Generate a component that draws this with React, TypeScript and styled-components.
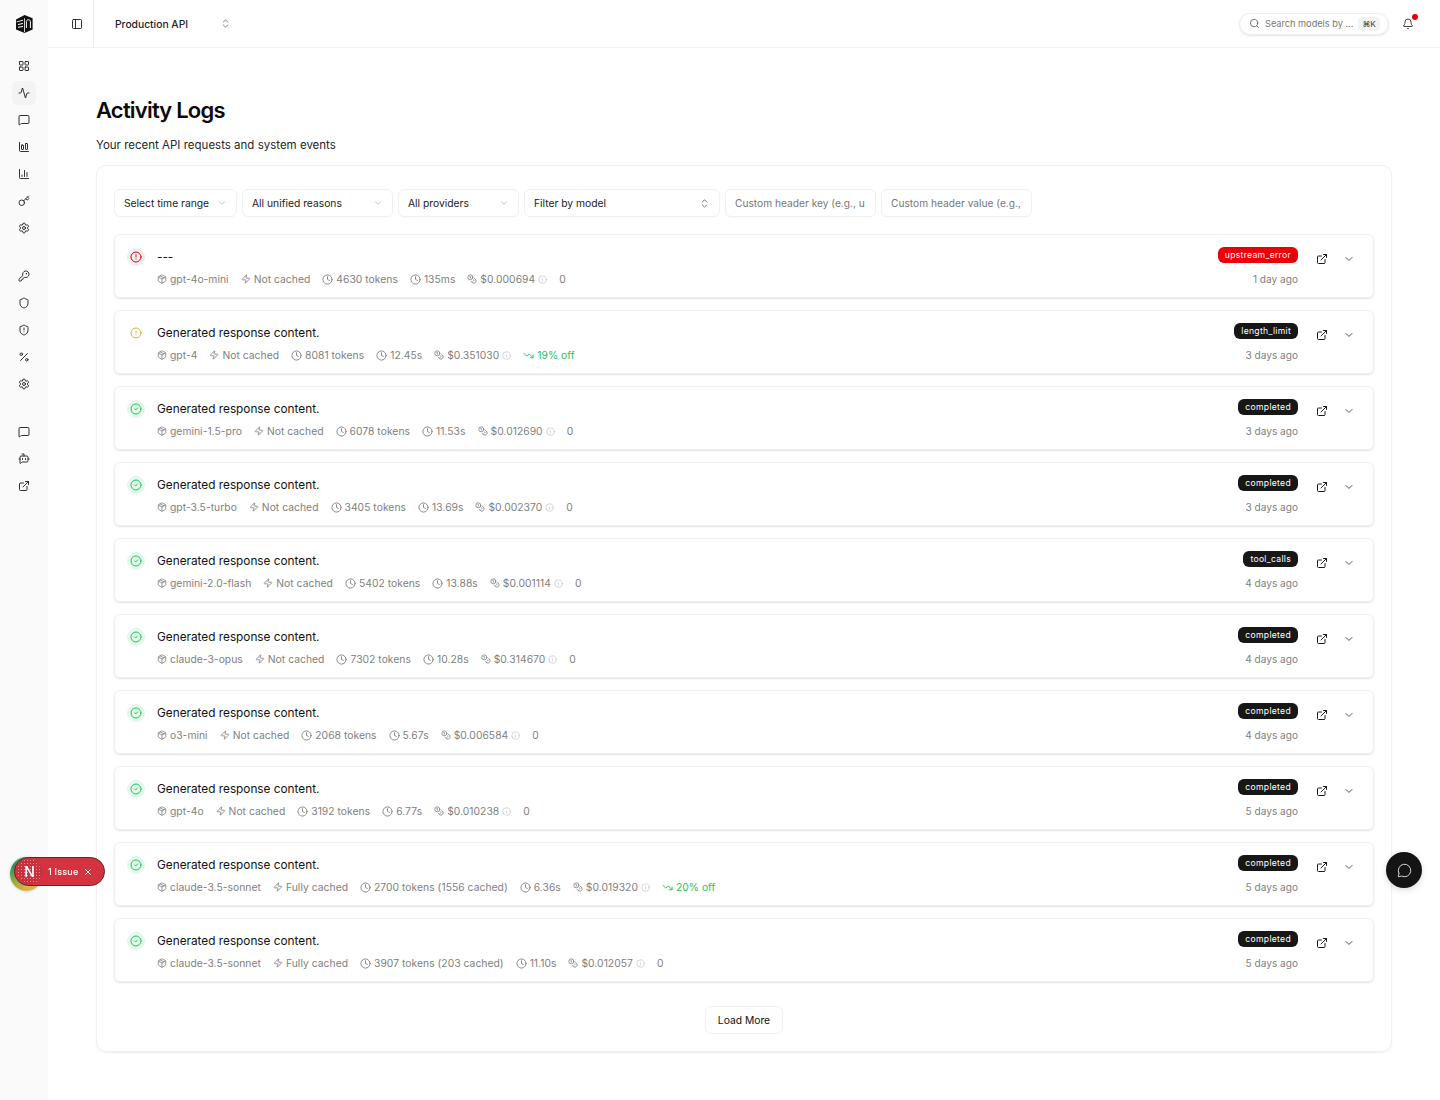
import styled, { createGlobalStyle } from 'styled-components'
import {
  Activity,
  BotMessageSquare,
  ChartColumn,
  ChartColumnBig,
  ChevronDown,
  ChevronsUpDown,
  CircleAlert,
  CircleCheck,
  Clock,
  Coins,
  ExternalLink,
  Info,
  Key,
  KeyRound,
  LayoutGrid,
  MessageCircle,
  MessageSquare,
  Package,
  PanelLeft,
  Percent,
  Search,
  Settings,
  Shield,
  ShieldAlert,
  TrendingDown,
  Bell,
  X,
  Zap,
} from 'lucide-react'

const GlobalStyle = createGlobalStyle`
  html, body {
    margin: 0;
    padding: 0;
    background: #fff;
    font-family: Inter, "Liberation Sans", sans-serif;
    color: #0a0a0a;
  }
  * { box-sizing: border-box; }
`

const Shell = styled.div`
  display: flex;
  width: 1440px;
  min-height: 1100px;
`

const Sidebar = styled.aside`
  flex: none;
  width: 48px;
  background: #fafafa;
  display: flex;
  flex-direction: column;
  align-items: center;
`

const LogoSlot = styled.div`
  height: 48px;
  display: flex;
  align-items: center;
  justify-content: center;
`

const NavGroup = styled.nav`
  display: flex;
  flex-direction: column;
  gap: 3px;
  margin-top: 6px;

  & + & {
    margin-top: 24px;
  }
`

const NavItem = styled.div<{ $active?: boolean }>`
  width: 24px;
  height: 24px;
  border-radius: 6px;
  display: flex;
  align-items: center;
  justify-content: center;
  background: ${({ $active }) => ($active ? '#f3f3f3' : 'transparent')};
  color: #1a1a1a;
`

const Main = styled.main`
  flex: 1;
  min-width: 0;
`

const Header = styled.header`
  height: 48px;
  display: flex;
  align-items: center;
  border-bottom: 1px solid #f2f2f2;
`

const ToggleCell = styled.div`
  width: 46px;
  height: 100%;
  display: flex;
  align-items: center;
  justify-content: center;
  border-right: 1px solid #ececec;
  color: #1a1a1a;
  padding-left: 12px;
`

const Project = styled.div`
  width: 116px;
  margin-left: 21px;
  display: flex;
  align-items: center;
  justify-content: space-between;
  font-size: 10.3px;
  font-weight: 500;
  color: #222;

  svg {
    color: #777;
  }
`

const HeaderRight = styled.div`
  margin-left: auto;
  display: flex;
  align-items: center;
  gap: 12px;
  padding-right: 25px;
`

const SearchPill = styled.div`
  width: 150px;
  height: 22px;
  border-radius: 11px;
  border: 1px solid #eee;
  box-shadow: 0 1px 2px rgba(0, 0, 0, 0.1);
  display: flex;
  align-items: center;
  gap: 5px;
  padding: 0 10px 0 9px;
  font-size: 9.2px;
  color: #777;
  background: #fff;
  white-space: nowrap;

  svg {
    flex: none;
    color: #666;
  }
`

const Kbd = styled.span`
  margin-left: auto;
  font-size: 8px;
  height: 14px;
  padding: 0 4px;
  border-radius: 4px;
  background: #f3f3f3;
  color: #555;
  display: flex;
  align-items: center;
  font-weight: 500;
`

const BellWrap = styled.div`
  position: relative;
  width: 14px;
  height: 14px;
  display: flex;
  align-items: center;
  justify-content: center;
  color: #444;
`

const RedDot = styled.span`
  position: absolute;
  top: -3px;
  right: -3px;
  width: 6px;
  height: 6px;
  border-radius: 50%;
  background: #e7000b;
`

const Content = styled.div`
  padding: 48px 48px 48px;
`

const Title = styled.h1`
  margin: 0;
  font-size: 22px;
  line-height: 28px;
  font-weight: 600;
  letter-spacing: -0.8px;
  color: #0a0a0a;
`

const Subtitle = styled.p`
  margin: 12px 0 0;
  font-size: 11.5px;
  line-height: 18px;
  color: #262626;
`

const Card = styled.section`
  margin-top: 11px;
  height: 887px;
  border: 1px solid #f0f0f0;
  border-radius: 10px;
  box-shadow: 0 1px 2px rgba(0, 0, 0, 0.07);
  padding: 23px 17px 0;
`

const Filters = styled.div`
  display: flex;
  gap: 5px;
`

const Select = styled.div<{ $w: number; $dark?: boolean }>`
  width: ${({ $w }) => $w}px;
  height: 28px;
  flex: none;
  border: 1px solid #f0f0f0;
  border-radius: 6px;
  box-shadow: 0 1px 1px rgba(0, 0, 0, 0.02);
  display: flex;
  align-items: center;
  justify-content: space-between;
  padding: 0 9px;
  font-size: 10.3px;
  color: #222;
  white-space: nowrap;
  overflow: hidden;

  svg {
    flex: none;
    color: ${({ $dark }) => ($dark ? '#666' : '#bbb')};
  }
`

const InputBox = styled(Select)`
  color: #777;
  font-size: 10.2px;
`

const Rows = styled.div`
  margin-top: 17px;
  display: flex;
  flex-direction: column;
  gap: 12px;
`

const Row = styled.article`
  height: 64px;
  border: 1px solid #f0f0f0;
  border-radius: 6px;
  box-shadow: 0 1px 2px rgba(0, 0, 0, 0.12);
  display: flex;
  align-items: flex-start;
  padding: 13px 18px 0 12px;
`

const StatusDisc = styled.div<{ $tone: 'red' | 'yellow' | 'green' }>`
  flex: none;
  width: 18px;
  height: 18px;
  border-radius: 50%;
  display: flex;
  align-items: center;
  justify-content: center;
  background: ${({ $tone }) =>
    $tone === 'red' ? '#eeeeee' : $tone === 'green' ? '#e3f8ea' : 'transparent'};
  color: ${({ $tone }) =>
    $tone === 'red' ? '#e7000b' : $tone === 'green' ? '#22c55e' : '#d4b13f'};
`

const RowBody = styled.div`
  margin-left: 12px;
  padding-top: 1px;
  flex: 1;
  min-width: 0;
`

const RowTitle = styled.div`
  font-size: 11.8px;
  line-height: 16px;
  color: #111;
`

const Meta = styled.div`
  margin-top: 7px;
  display: flex;
  align-items: center;
  gap: 12px;
  font-size: 10.3px;
  line-height: 14px;
  color: #808080;
  letter-spacing: 0.04px;
`

const MetaItem = styled.span<{ $green?: boolean }>`
  display: inline-flex;
  align-items: center;
  gap: 3px;
  white-space: nowrap;
  color: ${({ $green }) => ($green ? '#22c55e' : 'inherit')};
`

const InfoIcon = styled(Info)`
  color: #c8c8c8;
`

const RowSide = styled.div`
  flex: none;
  margin-top: -1px;
  display: flex;
  flex-direction: column;
  align-items: flex-end;
  gap: 9px;
`

const Badge = styled.span<{ $red?: boolean }>`
  height: 16px;
  padding: 0 7px;
  border-radius: 6px;
  display: inline-flex;
  align-items: center;
  font-size: 8.6px;
  font-weight: 400;
  letter-spacing: 0.3px;
  color: #fff;
  background: ${({ $red }) => ($red ? '#ea0008' : '#171717')};
`

const Ago = styled.span`
  font-size: 10.1px;
  line-height: 14px;
  color: #808080;
`

const RowActions = styled.div`
  flex: none;
  display: flex;
  align-items: center;
  gap: 15px;
  margin: 5px 0 0 18px;
  color: #1a1a1a;

  svg + svg {
    color: #555;
  }
`

const LoadRow = styled.div`
  display: flex;
  justify-content: center;
  margin-top: 24px;
`

const LoadButton = styled.button`
  width: 78px;
  height: 28px;
  border: 1px solid #f0f0f0;
  border-radius: 6px;
  background: #fff;
  font: 400 10.3px Inter, sans-serif;
  color: #111;
`

const ChatFab = styled.div`
  position: fixed;
  left: 1386px;
  top: 852px;
  width: 36px;
  height: 36px;
  border-radius: 50%;
  background: #141414;
  box-shadow: 0 2px 6px rgba(0, 0, 0, 0.15);
  color: #d8d8d8;
  display: flex;
  align-items: center;
  justify-content: center;
`

const DevBadge = styled.div`
  position: fixed;
  left: 10px;
  top: 857px;
  width: 95px;
  height: 34px;
`

const DevHalo = styled.div`
  position: absolute;
  left: 0;
  top: 0;
  width: 33px;
  height: 34px;
  border-radius: 50%;
  background: conic-gradient(#3fa46b, #8fae3a, #b7c24a, #e2b04a, #8fae3a, #2f8f5f, #3fa46b);
  box-shadow: 0 0 3px rgba(0, 0, 0, 0.2);
`

const DevPill = styled.div`
  position: absolute;
  left: 4px;
  top: 0;
  width: 91px;
  height: 29px;
  border-radius: 15px;
  border: 1px solid #5c2a2e;
  background: radial-gradient(rgba(255, 40, 40, 0.45) 0.6px, transparent 0.8px) 0 0 / 3px 3px #d1333f;
  color: #fff;
  display: flex;
  align-items: center;
  font-size: 9px;
  font-weight: 500;

  svg {
    flex: none;
  }
`

const DevLogo = styled.span`
  flex: none;
  margin-left: 2px;
  width: 25px;
  height: 25px;
  border-radius: 50%;
  display: flex;
  align-items: center;
  justify-content: center;
  font-size: 14px;
  font-weight: 500;
  background: radial-gradient(rgba(255, 255, 255, 0.5) 0.6px, transparent 0.8px) 0 0 / 3px 3px #c8303c;
`

const DevLabel = styled.span`
  margin: 0 5px 0 6px;
  letter-spacing: 0.2px;
`

function Logo() {
  return (
    <svg width="18" height="18" viewBox="0 0 18 18" aria-hidden>
      <path d="M9.6 0 17.6 3.2V14.6L9.6 18 1 14.4V4.4Z" fill="#111" />
      <path d="M1.6 6.4 8 4.8v.9L1.6 7.3zM3 9 8 8v.9L3 9.9zM3 11.8l5-.7v.9l-5 .7z" fill="#fff" />
      <path d="M9 3.2h.8v14H9z" fill="#fff" />
      <path
        d="M11.4 13V6.6c0-1.1 1-1.9 2-1.9s2 .8 2 1.9V13"
        fill="none"
        stroke="#fff"
        strokeWidth="1"
      />
    </svg>
  )
}

type Status = 'red' | 'yellow' | 'green'

interface LogRow {
  title: string
  status: Status
  model: string
  cache: string
  tokens: string
  time: string
  cost: string
  off?: string
  reason: string
  ago: string
}

const logs: LogRow[] = [
  { title: '---', status: 'red', model: 'gpt-4o-mini', cache: 'Not cached', tokens: '4630 tokens', time: '135ms', cost: '$0.000694', reason: 'upstream_error', ago: '1 day ago' },
  { title: 'Generated response content.', status: 'yellow', model: 'gpt-4', cache: 'Not cached', tokens: '8081 tokens', time: '12.45s', cost: '$0.351030', off: '19% off', reason: 'length_limit', ago: '3 days ago' },
  { title: 'Generated response content.', status: 'green', model: 'gemini-1.5-pro', cache: 'Not cached', tokens: '6078 tokens', time: '11.53s', cost: '$0.012690', reason: 'completed', ago: '3 days ago' },
  { title: 'Generated response content.', status: 'green', model: 'gpt-3.5-turbo', cache: 'Not cached', tokens: '3405 tokens', time: '13.69s', cost: '$0.002370', reason: 'completed', ago: '3 days ago' },
  { title: 'Generated response content.', status: 'green', model: 'gemini-2.0-flash', cache: 'Not cached', tokens: '5402 tokens', time: '13.88s', cost: '$0.001114', reason: 'tool_calls', ago: '4 days ago' },
  { title: 'Generated response content.', status: 'green', model: 'claude-3-opus', cache: 'Not cached', tokens: '7302 tokens', time: '10.28s', cost: '$0.314670', reason: 'completed', ago: '4 days ago' },
  { title: 'Generated response content.', status: 'green', model: 'o3-mini', cache: 'Not cached', tokens: '2068 tokens', time: '5.67s', cost: '$0.006584', reason: 'completed', ago: '4 days ago' },
  { title: 'Generated response content.', status: 'green', model: 'gpt-4o', cache: 'Not cached', tokens: '3192 tokens', time: '6.77s', cost: '$0.010238', reason: 'completed', ago: '5 days ago' },
  { title: 'Generated response content.', status: 'green', model: 'claude-3.5-sonnet', cache: 'Fully cached', tokens: '2700 tokens (1556 cached)', time: '6.36s', cost: '$0.019320', off: '20% off', reason: 'completed', ago: '5 days ago' },
  { title: 'Generated response content.', status: 'green', model: 'claude-3.5-sonnet', cache: 'Fully cached', tokens: '3907 tokens (203 cached)', time: '11.10s', cost: '$0.012057', reason: 'completed', ago: '5 days ago' },
]

const navGroups = [
  [LayoutGrid, Activity, MessageSquare, ChartColumnBig, ChartColumn, Key, Settings],
  [KeyRound, Shield, ShieldAlert, Percent, Settings],
  [MessageSquare, BotMessageSquare, ExternalLink],
]

function LogItem({ log }: { log: LogRow }) {
  const StatusIcon = log.status === 'green' ? CircleCheck : CircleAlert
  return (
    <Row>
      <StatusDisc $tone={log.status}>
        <StatusIcon size={12} strokeWidth={2} />
      </StatusDisc>
      <RowBody>
        <RowTitle>{log.title}</RowTitle>
        <Meta>
          <MetaItem>
            <Package size={10} />
            {log.model}
          </MetaItem>
          <MetaItem>
            <Zap size={10} />
            {log.cache}
          </MetaItem>
          <MetaItem>
            <Clock size={11} />
            {log.tokens}
          </MetaItem>
          <MetaItem>
            <Clock size={11} />
            {log.time}
          </MetaItem>
          <MetaItem>
            <Coins size={10} />
            {log.cost}
            <InfoIcon size={9} />
          </MetaItem>
          {log.off ? (
            <MetaItem $green>
              <TrendingDown size={11} />
              {log.off}
            </MetaItem>
          ) : (
            <MetaItem>0</MetaItem>
          )}
        </Meta>
      </RowBody>
      <RowSide>
        <Badge $red={log.status === 'red'}>{log.reason}</Badge>
        <Ago>{log.ago}</Ago>
      </RowSide>
      <RowActions>
        <ExternalLink size={12} strokeWidth={2} />
        <ChevronDown size={12} strokeWidth={2} />
      </RowActions>
    </Row>
  )
}

export default function App() {
  return (
    <Shell>
      <GlobalStyle />
      <Sidebar>
        <LogoSlot>
          <Logo />
        </LogoSlot>
        {navGroups.map((group, g) => (
          <NavGroup key={g}>
            {group.map((Icon, i) => (
              <NavItem key={i} $active={g === 0 && i === 1}>
                <Icon size={12} strokeWidth={1.8} />
              </NavItem>
            ))}
          </NavGroup>
        ))}
      </Sidebar>
      <Main>
        <Header>
          <ToggleCell>
            <PanelLeft size={12} strokeWidth={1.8} />
          </ToggleCell>
          <Project>
            Production API
            <ChevronsUpDown size={11} />
          </Project>
          <HeaderRight>
            <SearchPill>
              <Search size={11} />
              Search models by ...
              <Kbd>⌘K</Kbd>
            </SearchPill>
            <BellWrap>
              <Bell size={12} />
              <RedDot />
            </BellWrap>
          </HeaderRight>
        </Header>
        <Content>
          <Title>Activity Logs</Title>
          <Subtitle>Your recent API requests and system events</Subtitle>
          <Card>
            <Filters>
              <Select $w={123}>
                Select time range
                <ChevronDown size={10} />
              </Select>
              <Select $w={151}>
                All unified reasons
                <ChevronDown size={10} />
              </Select>
              <Select $w={121}>
                All providers
                <ChevronDown size={10} />
              </Select>
              <Select $w={196} $dark>
                Filter by model
                <ChevronsUpDown size={11} />
              </Select>
              <InputBox $w={151}>Custom header key (e.g., u</InputBox>
              <InputBox $w={151}>Custom header value (e.g.,</InputBox>
            </Filters>
            <Rows>
              {logs.map((log, i) => (
                <LogItem key={i} log={log} />
              ))}
            </Rows>
            <LoadRow>
              <LoadButton>Load More</LoadButton>
            </LoadRow>
          </Card>
        </Content>
      </Main>
      <ChatFab>
        <MessageCircle size={15} strokeWidth={1.6} />
      </ChatFab>
      <DevBadge>
        <DevHalo />
        <DevPill>
          <DevLogo>N</DevLogo>
          <DevLabel>1 Issue</DevLabel>
          <X size={10} strokeWidth={2.4} />
        </DevPill>
      </DevBadge>
    </Shell>
  )
}
